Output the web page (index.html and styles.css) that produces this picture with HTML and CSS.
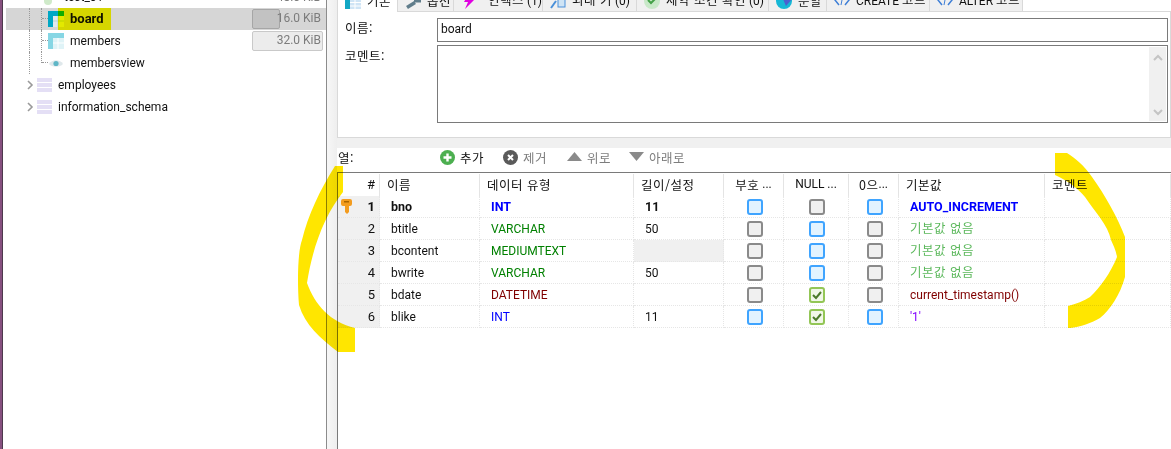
FILE: index.html
```html
<!DOCTYPE html>
<html lang="ko">
<head>
<meta charset="utf-8">
<title>board</title>
<link rel="stylesheet" href="styles.css">
</head>
<body>
<div class="app">
  <div class="edge"></div>
  <aside class="tree">
    <div class="node node-clip">
      <span class="dbspace"></span>
      <svg class="dbicon" width="15" height="15" viewBox="0 0 15 15"><rect x="0" y="0" width="15" height="4" fill="#e4dff5"/><rect x="0" y="5" width="15" height="4" fill="#e4dff5"/><circle cx="11" cy="11" r="4" fill="#cfeac9"/></svg>
      <span class="node-name">test_01</span>
      <span class="top-size">48.0 KiB</span>
    </div>
    <div class="node selected">
      <span class="mark"></span>
      <span class="guide guide-a"></span><span class="guide guide-b"></span><span class="twig"></span>
      <svg class="ticon" width="16" height="16" viewBox="0 0 16 16"><rect width="16" height="16" fill="#e3e9ee"/><rect width="16" height="5" fill="#00a7c4"/><rect width="5" height="16" fill="#00a7c4"/><rect x="10" width="6" height="5" fill="#12ad2b"/><path d="M5 10h11M10 5v11" stroke="#b9d3da"/></svg>
      <span class="node-name strong">board</span>
      <span class="size"><span class="size-bar sel" style="width:28px"></span><span class="size-text">16.0 KiB</span></span>
    </div>
    <div class="node">
      <span class="guide guide-a"></span><span class="guide guide-b"></span><span class="twig"></span>
      <svg class="ticon" width="16" height="16" viewBox="0 0 16 16"><rect width="16" height="16" fill="#dff3f7"/><rect width="16" height="5" fill="#86d6e4"/><rect width="5" height="16" fill="#86d6e4"/><path d="M5 10h11M10 5v11" stroke="#fff"/></svg>
      <span class="node-name">members</span>
      <span class="size"><span class="size-bar" style="width:71px"></span><span class="size-text">32.0 KiB</span></span>
    </div>
    <div class="node">
      <span class="guide guide-a"></span><span class="guide guide-c"></span><span class="twig"></span>
      <svg class="ticon" width="16" height="16" viewBox="0 0 16 16"><path d="M1 9c3-5 11-5 14 0-3 3.500-11 3.500-14 0z" fill="#dfe8eb"/><circle cx="8" cy="8.500" r="2.600" fill="#5fb6c6"/></svg>
      <span class="node-name">membersview</span>
    </div>
    <div class="node">
      <svg class="chev" width="8" height="10" viewBox="0 0 8 10"><path d="M2 1l4 4-4 4" fill="none" stroke="#9a9a9a" stroke-width="1.6"/></svg>
      <svg class="dbicon" width="15" height="15" viewBox="0 0 15 15"><path d="M0 0h15v4H0zM0 5h15v4H0zM0 10h15v4H0z" fill="#e4dff5"/></svg>
      <span class="node-name">employees</span>
    </div>
    <div class="node">
      <svg class="chev" width="8" height="10" viewBox="0 0 8 10"><path d="M2 1l4 4-4 4" fill="none" stroke="#9a9a9a" stroke-width="1.6"/></svg>
      <svg class="dbicon" width="15" height="15" viewBox="0 0 15 15"><path d="M0 0h15v4H0zM0 5h15v4H0zM0 10h15v4H0z" fill="#e4dff5"/></svg>
      <span class="node-name">information_schema</span>
    </div>
  </aside>
  <div class="gutter"></div>
  <main class="editor">
    <nav class="tabs">
      <div class="tab active"><svg width="16" height="14" viewBox="0 0 16 14"><rect width="16" height="14" fill="#cfe4f5"/><rect width="5" height="14" fill="#12a7c4"/><path d="M5 7.500h11M5 11h11M10 0v14" stroke="#fff"/></svg><span class="ko">기본</span></div>
      <div class="tab"><svg width="16" height="14" viewBox="0 0 16 14"><path d="M2 12.500L10 7.500" stroke="#607d8b" stroke-width="3.500"/><path d="M9 5.500h7" stroke="#607d8b" stroke-width="4"/></svg><span class="ko">옵션</span></div>
      <div class="tab"><svg width="16" height="14" viewBox="0 0 16 14"><path d="M7 0L3 7h4l-3 7 9-9H9l3-5z" fill="#e000e0"/></svg><span class="tab-shift"><span class="ko">인덱스</span> (1)</span></div>
      <div class="tab"><svg width="16" height="14" viewBox="0 0 16 14"><path d="M1 13L6 6" stroke="#4a90d9" stroke-width="2"/><rect x="8" y="3" width="7" height="9" fill="#cfe4f5" stroke="#4a90d9"/></svg><span><span class="ko">외래 키</span> (0)</span></div>
      <div class="tab"><svg width="16" height="14" viewBox="0 0 16 14"><circle cx="8" cy="6" r="8" fill="#c8e8c8"/><path d="M4 5l3 3 5-5" fill="none" stroke="#43a047" stroke-width="2"/></svg><span><span class="ko">제약 조건 확인</span> (0)</span></div>
      <div class="tab"><svg width="16" height="14" viewBox="0 0 16 14"><circle cx="8" cy="6" r="8" fill="#16b7d6"/><path d="M7 4H16L10 11z" fill="#4a5fd0"/></svg><span class="ko">분할</span></div>
      <div class="tab"><svg width="16" height="14" viewBox="0 0 16 14"><path d="M5 0L1 5l4 5M11 0l4 5-4 5" fill="none" stroke="#3f7fd6" stroke-width="1.500"/><path d="M9 0L7 10" stroke="#3f7fd6"/></svg><span>CREATE <span class="ko">코드</span></span></div>
      <div class="tab"><svg width="16" height="14" viewBox="0 0 16 14"><path d="M5 0L1 5l4 5M11 0l4 5-4 5" fill="none" stroke="#3f7fd6" stroke-width="1.500"/><path d="M9 0L7 10" stroke="#3f7fd6"/></svg><span>ALTER <span class="ko">코드</span></span></div>
      <div class="tab-rest"></div>
    </nav>
    <section class="panel">
      <div class="field name-field">
        <label class="field-label ko">이름:</label>
        <div class="input">board</div>
      </div>
      <div class="field comment-field">
        <label class="field-label ko">코멘트:</label>
        <div class="input textarea">
          <div class="scrollbar">
            <svg width="10" height="7" viewBox="0 0 10 7"><path d="M1 6l4-4 4 4" fill="none" stroke="#c4c4c4" stroke-width="2"/></svg>
            <svg width="10" height="7" viewBox="0 0 10 7"><path d="M1 1l4 4 4-4" fill="none" stroke="#c4c4c4" stroke-width="2"/></svg>
          </div>
        </div>
      </div>
    </section>
    <div class="band"></div>
    <div class="toolbar">
      <span class="tool-label ko">열:</span>
      <span class="tool tool-add"><svg width="15" height="15" viewBox="0 0 15 15"><circle cx="7.500" cy="7.500" r="7.500" fill="#4caf50"/><path d="M7.500 3.500v8M3.500 7.500h8" stroke="#fff" stroke-width="2.400"/></svg><span class="ko">추가</span></span>
      <span class="tool tool-off tool-del"><svg width="15" height="15" viewBox="0 0 15 15"><circle cx="7.500" cy="7.500" r="7.500" fill="#5a5a5a"/><path d="M5 5l5 5M10 5l-5 5" stroke="#fff" stroke-width="2"/></svg><span class="ko">제거</span></span>
      <span class="tool tool-off tool-up"><svg width="15" height="10" viewBox="0 0 15 10"><path d="M7.500 0L15 9H0z" fill="#8a8a8a"/></svg><span class="ko">위로</span></span>
      <span class="tool tool-off tool-down"><svg width="15" height="10" viewBox="0 0 15 10"><path d="M0 0h15L7.500 9z" fill="#8a8a8a"/></svg><span class="ko">아래로</span></span>
    </div>
    <div class="grid">
      <div class="row head">
        <div class="cell num">#</div>
        <div class="cell ko">이름</div>
        <div class="cell ko">데이터 유형</div>
        <div class="cell ko">길이/설정</div>
        <div class="cell center"><span class="ko">부호</span>&nbsp;...</div>
        <div class="cell center">NULL ...</div>
        <div class="cell center"><span class="ko">0으</span>...</div>
        <div class="cell ko">기본값</div>
        <div class="cell ko">코멘트</div>
      </div>
      <div class="row bold">
        <div class="cell num"><svg class="key" width="12" height="15" viewBox="0 0 12 15"><path d="M2 0h7a2 2 0 0 1 2 2v3a2 2 0 0 1-2 2H8v6l-2 2-2-2V7H2a2 2 0 0 1-2-2V2a2 2 0 0 1 2-2z" fill="#f39c1f"/><rect x="3" y="2" width="5" height="1.500" fill="#a96500"/></svg>1</div>
        <div class="cell">bno</div><div class="cell t-int">INT</div><div class="cell">11</div>
        <div class="cell box"><i class="cb blue"></i></div><div class="cell box"><i class="cb gray"></i></div><div class="cell box"><i class="cb blue"></i></div>
        <div class="cell t-int">AUTO_INCREMENT</div><div class="cell"></div>
      </div>
      <div class="row">
        <div class="cell num">2</div>
        <div class="cell">btitle</div><div class="cell t-str">VARCHAR</div><div class="cell">50</div>
        <div class="cell box"><i class="cb gray"></i></div><div class="cell box"><i class="cb blue"></i></div><div class="cell box"><i class="cb gray"></i></div>
        <div class="cell t-none ko">기본값 없음</div><div class="cell"></div>
      </div>
      <div class="row">
        <div class="cell num">3</div>
        <div class="cell">bcontent</div><div class="cell t-str">MEDIUMTEXT</div><div class="cell off"></div>
        <div class="cell box"><i class="cb gray"></i></div><div class="cell box"><i class="cb blue"></i></div><div class="cell box"><i class="cb gray"></i></div>
        <div class="cell t-none ko">기본값 없음</div><div class="cell"></div>
      </div>
      <div class="row">
        <div class="cell num">4</div>
        <div class="cell">bwrite</div><div class="cell t-str">VARCHAR</div><div class="cell">50</div>
        <div class="cell box"><i class="cb gray"></i></div><div class="cell box"><i class="cb blue"></i></div><div class="cell box"><i class="cb gray"></i></div>
        <div class="cell t-none ko">기본값 없음</div><div class="cell"></div>
      </div>
      <div class="row">
        <div class="cell num">5</div>
        <div class="cell">bdate</div><div class="cell t-date">DATETIME</div><div class="cell"></div>
        <div class="cell box"><i class="cb gray"></i></div>
        <div class="cell box"><i class="cb green"><svg width="12" height="12" viewBox="0 0 12 12"><path d="M2 6l3 3 5-6" fill="none" stroke="#4b7a2a" stroke-width="2"/></svg></i></div>
        <div class="cell box"><i class="cb gray"></i></div>
        <div class="cell t-date">current_timestamp()</div><div class="cell"></div>
      </div>
      <div class="row">
        <div class="cell num">6</div>
        <div class="cell">blike</div><div class="cell t-int">INT</div><div class="cell">11</div>
        <div class="cell box"><i class="cb blue"></i></div>
        <div class="cell box"><i class="cb green"><svg width="12" height="12" viewBox="0 0 12 12"><path d="M2 6l3 3 5-6" fill="none" stroke="#4b7a2a" stroke-width="2"/></svg></i></div>
        <div class="cell box"><i class="cb blue"></i></div>
        <div class="cell t-val">'1'</div><div class="cell"></div>
      </div>
    </div>
  </main>
  <svg class="ink" width="1171" height="449" viewBox="0 0 1171 449">
    <path d="M335 166H343V192C325 215 313 245 307 283C315 305 330 322 355 328V352H338C320 338 305 325 299 305C297 280 298 250 302 240C308 215 320 190 335 166Z" fill="#ffe600"/>
    <path d="M1055 153H1067C1075 158 1084 165 1092 177C1105 195 1118 218 1125 237V277C1120 295 1110 310 1100 318C1092 323 1080 327 1070 328H1068V306C1076 304 1084 301 1090 297C1100 288 1111 272 1117 257C1116 250 1113 245 1111 240C1108 225 1095 212 1085 197C1078 188 1066 180 1055 175Z" fill="#ffe600"/>
  </svg>
</div>
</body>
</html>
```
FILE: styles.css
```css
* { box-sizing: border-box; }
html, body { margin: 0; padding: 0; height: 100%; background: #fff; }
body { font: 12px Roboto, "Noto Sans CJK KR", sans-serif; color: #111; overflow: hidden; }
.ko { font-family: "Noto Sans CJK KR", sans-serif; letter-spacing: 0.5px; font-size: 12.500px; }

.app { position: relative; display: flex; width: 1171px; height: 449px; overflow: hidden; }
.edge { width: 3px; background: #86507f; border-right: 1px solid #4d3a4d; flex: none; }

/* tree */
.tree { width: 323px; flex: none; overflow: hidden; padding-left: 3px; }
.node { position: relative; display: flex; align-items: center; height: 22px; }
.node-clip { margin-top: -14px; }
.node-name { white-space: nowrap; }
.node-clip .node-name { margin-left: 6px; }
.dbspace { width: 31px; flex: none; }
.selected { background: #d6d6d6; }
.strong { font-weight: 700; font-size: 13px; padding-bottom: 2px; }
.mark { position: absolute; left: 52px; top: 0; bottom: 0; width: 53px; background: #ffff00; mix-blend-mode: multiply; z-index: 2; }
.guide, .twig { position: absolute; }
.guide-a { left: 23px; top: 0; bottom: 0; border-left: 1px dotted #999; }
.guide-b { left: 35px; top: 0; bottom: 0; border-left: 1px dotted #999; }
.guide-c { left: 35px; top: 0; height: 11px; border-left: 1px dotted #999; }
.twig { left: 36px; top: 10px; width: 6px; border-top: 1px dotted #999; }
.ticon { flex: none; margin: 0 6px 0 42px; }
.dbicon { flex: none; margin-right: 6px; }
.chev { flex: none; margin: 0 3px 0 20px; }
.size { margin-left: auto; margin-right: 3px; width: 71px; height: 20px; display: grid; color: #7c7c7c; }
.size-bar, .size-text { grid-area: 1 / 1; }
.size-bar { background: #ececec; border: 1px solid #c9c9c9; border-radius: 2px; height: 20px; }
.size-bar.sel { background: #c2c2c2; border-color: #a6a6a6; }
.size-text { text-align: right; padding-right: 2px; line-height: 19px; z-index: 1; }
.top-size { margin-left: auto; margin-right: 5px; color: #7c7c7c; }

.gutter { width: 11px; flex: none; background: linear-gradient(90deg, #f7f7f7, #eee); border-left: 1px solid #8c8c8c; }

/* right */
.editor { flex: 1; min-width: 0; display: flex; flex-direction: column; }
.tabs { height: 12px; display: grid; grid-template-columns: 61px 56px 89px 94px 132px 58px 103px 93px 1fr; overflow: hidden; }
.tab { display: flex; align-items: flex-end; gap: 6px; height: 12px; background: #f0f0f0; border-right: 1px solid #d9d9d9; border-bottom: 1px solid #d9d9d9; white-space: nowrap; line-height: 16px; padding: 0 0 2px 7px; overflow: hidden; }
.tab > span, .tab > svg { flex: none; }
.tab-shift { margin-left: 5px; }
.tab.active { background: #fff; border-bottom: 0; border-left: 1px solid #d9d9d9; padding-bottom: 3px; }
.tab-rest { border-bottom: 1px solid #d9d9d9; }

.panel { height: 126px; border-left: 1px solid #d9d9d9; border-right: 1px solid #d9d9d9; border-bottom: 1px solid #d9d9d9; padding: 6px 2px 0 7px; display: flex; flex-direction: column; gap: 3px; }
.field { display: flex; }
.field-label { width: 92px; flex: none; line-height: 18px; padding-top: 1px; }
.input { flex: 1; border: 1px solid #7a7a7a; height: 24px; line-height: 20px; padding-left: 3px; }
.textarea { height: 78px; display: flex; justify-content: flex-end; padding: 1px; }
.comment-field .field-label { padding-top: 2px; }
.scrollbar { width: 17px; background: #f0f0f0; display: flex; flex-direction: column; justify-content: space-between; align-items: center; padding: 7px 0 5px; }
.band { height: 10px; background: #f0f0f0; }

.toolbar { height: 24px; display: flex; align-items: center; padding: 0 0 6px 1px; }
.tool-label { width: 102px; flex: none; }
.tool { display: inline-flex; align-items: center; gap: 5px; white-space: nowrap; }
.tool-off { color: #7d7d7d; }
.tool-add { width: 63px; }
.tool-del { width: 64px; }
.tool-up { width: 62px; }

.grid { flex: 1; border-top: 1px solid #7a7a7a; border-left: 1px solid #7a7a7a; }
.row { display: grid; grid-template-columns: 42px 100px 154px 90px 60px 65px 50px 146px 1fr; height: 22px; }
.head { height: 23px; }
.cell { display: flex; align-items: center; padding-left: 11px; border-right: 1px dotted #e6e6e6; border-bottom: 1px dotted #e6e6e6; white-space: nowrap; position: relative; }
.head .cell { padding-left: 7px; border-right: 1px solid #e4e4e4; border-bottom: 0; margin-top: 1px; padding-bottom: 2px; }
.cell.num { justify-content: flex-end; padding: 0 4px 0 0; background: #f0f0f0; font-size: 13px; }
.head .cell.num { background: #fff; padding-bottom: 1px; }
.head .cell.center { justify-content: center; padding-left: 0; }
.cell.box { justify-content: center; padding: 0 0 0 2px; }
.cell.off { background: #f0f0f0; }
.bold { font-weight: 700; font-size: 12.500px; }
.t-int { color: #0000ff; }
.t-str { color: #008000; }
.t-date { color: #800000; }
.t-val { color: #8000ff; }
.t-none { color: #5cb85c; padding-bottom: 2px; }
.key { position: absolute; left: 3px; top: 3px; }
.cb { display: flex; align-items: center; justify-content: center; width: 16px; height: 16px; border: 2px solid; border-radius: 3px; }
.cb.blue { border-color: #3fa4ff; background: #e2f3ff; }
.cb.gray { border-color: #8a8a8a; background: #f0f0f0; }
.cb.green { border-color: #93c656; background: #f1f7e8; }

.ink { position: absolute; left: 0; top: 0; mix-blend-mode: multiply; pointer-events: none; z-index: 3; }
```
